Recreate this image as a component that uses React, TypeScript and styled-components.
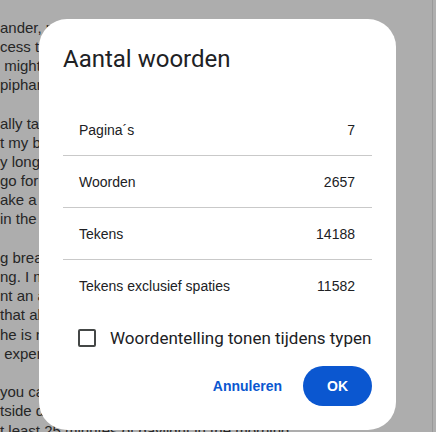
import React from "react";
import styled, { createGlobalStyle } from "styled-components";

const GlobalStyle = createGlobalStyle`
  html, body {
    margin: 0;
    padding: 0;
    width: 436px;
    height: 432px;
    overflow: hidden;
  }
  * {
    box-sizing: border-box;
  }
`;

const Screen = styled.div`
  position: relative;
  width: 436px;
  height: 432px;
  display: flex;
  background: #adadad;
  overflow: hidden;
`;

const DocArea = styled.div`
  flex: 1;
  padding-top: 17.6px;
  overflow: hidden;
  font-family: "Liberation Sans", Arial, sans-serif;
  font-size: 15px;
  line-height: 19.2px;
  color: #262626;
`;

const DocLine = styled.div`
  height: 19.2px;
  width: 380px;
  white-space: pre;
  overflow: hidden;
`;

const ScrollEdge = styled.div`
  width: 4px;
  border-left: 1px solid #9a9a9a;
  background: #afafaf;
`;

const Dialog = styled.div`
  position: absolute;
  left: 39px;
  top: 19px;
  width: 357px;
  padding: 24px;
  background: #ffffff;
  border-radius: 28px;
  font-family: Roboto, "Liberation Sans", sans-serif;
  color: #202124;
`;

const Title = styled.h2`
  margin: 0 0 29px;
  font-size: 24px;
  line-height: 32px;
  font-weight: 400;
`;

const StatList = styled.div`
  display: flex;
  flex-direction: column;
`;

const StatRow = styled.div<{ $last?: boolean }>`
  height: 52px;
  display: flex;
  align-items: center;
  justify-content: space-between;
  padding: 0 17px 0 16px;
  border-bottom: ${(p) => (p.$last ? "none" : "1px solid #c9c9c9")};
  font-family: "Liberation Sans", Arial, sans-serif;
  font-size: 14px;
`;

const CheckRow = styled.label`
  display: flex;
  align-items: center;
  height: 40px;
  margin-top: 6px;
  padding-left: 15px;
  gap: 14px;
  font-size: 17px;
  cursor: pointer;
`;

const Box = styled.span`
  width: 18px;
  height: 18px;
  border: 2px solid #444746;
  border-radius: 2px;
`;

const Actions = styled.div`
  display: flex;
  justify-content: flex-end;
  align-items: center;
  gap: 9px;
  margin-top: 8px;
`;

const Button = styled.button<{ $filled?: boolean }>`
  height: 40px;
  border: none;
  border-radius: 20px;
  padding: 0 ${(p) => (p.$filled ? "24px" : "12px")};
  min-width: ${(p) => (p.$filled ? "68px" : "0")};
  background: ${(p) => (p.$filled ? "#0b57d0" : "transparent")};
  color: ${(p) => (p.$filled ? "#ffffff" : "#0b57d0")};
  font-family: "Liberation Sans", Arial, sans-serif;
  font-size: 14px;
  font-weight: 700;
  cursor: pointer;
`;

const docLines = [
  "ander, perhaps you will find",
  "cess that comes with being",
  " might feel strange at first",
  "piphany in the middle of it.",
  "",
  "ally take a short walk after",
  "t my best ideas come to me",
  "y longer than ten minutes.",
  "go for a walk around the block",
  "ake a different route each",
  "in the neighbourhood.",
  "",
  "g breaks away from the screen",
  "ng. I make a point of stepping",
  "nt an alarm on my phone",
  "that always reminds me when",
  "he is not the only thing that",
  " experience of working.",
  "",
  "you can, try to get some",
  "tside during the day. Aim for",
  "t least 25 minutes of daylight in the morning",
];

const stats = [
  { label: "Pagina´s", value: "7" },
  { label: "Woorden", value: "2657" },
  { label: "Tekens", value: "14188" },
  { label: "Tekens exclusief spaties", value: "11582" },
];

const App = () => {
  return (
    <Screen>
      <GlobalStyle />
      <DocArea>
        {docLines.map((line, i) => (
          <DocLine key={i}>{line}</DocLine>
        ))}
      </DocArea>
      <ScrollEdge />
      <Dialog>
        <Title>Aantal woorden</Title>
        <StatList>
          {stats.map((s, i) => (
            <StatRow key={s.label} $last={i === stats.length - 1}>
              <span>{s.label}</span>
              <span>{s.value}</span>
            </StatRow>
          ))}
        </StatList>
        <CheckRow>
          <Box />
          <span>Woordentelling tonen tijdens typen</span>
        </CheckRow>
        <Actions>
          <Button>Annuleren</Button>
          <Button $filled>OK</Button>
        </Actions>
      </Dialog>
    </Screen>
  );
};

export default App;
